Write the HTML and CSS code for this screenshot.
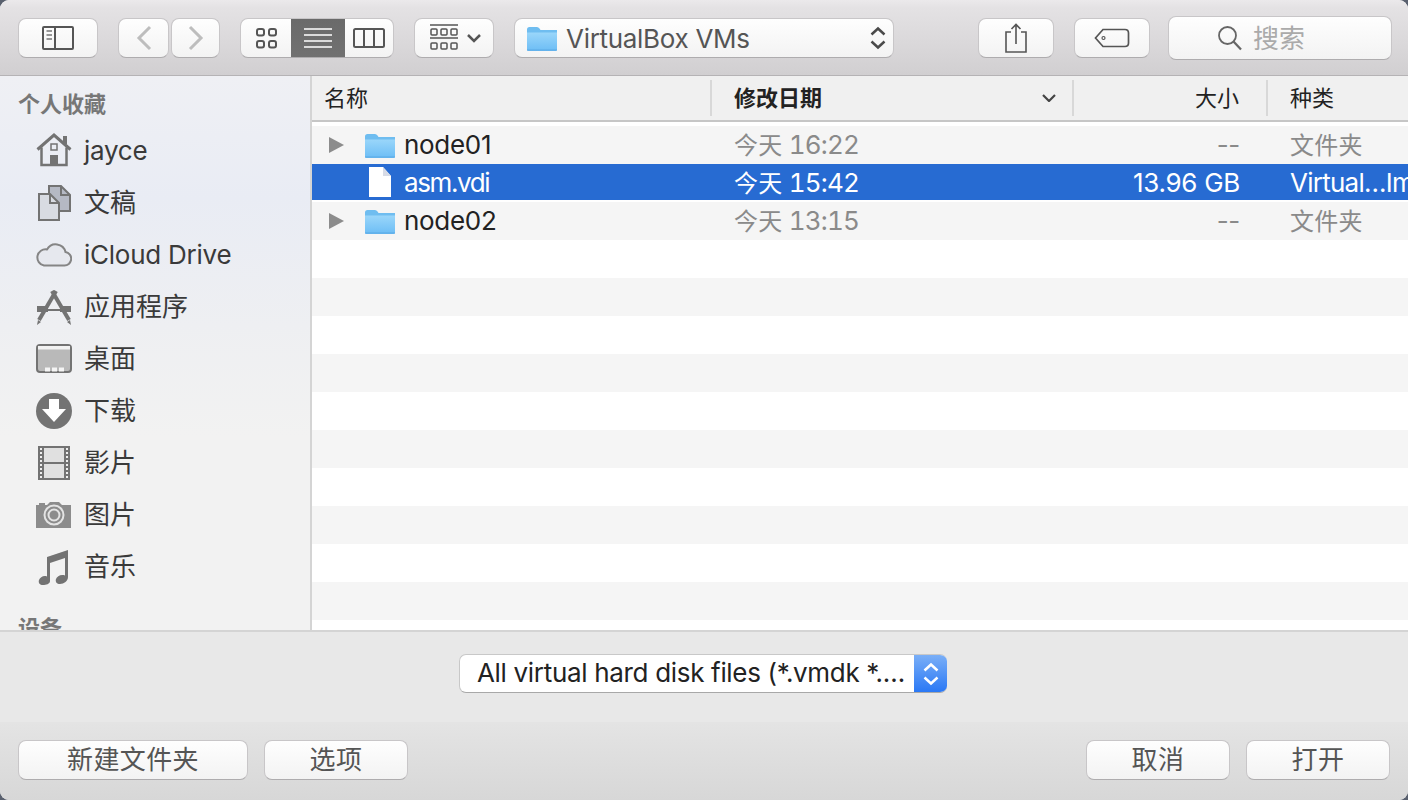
FILE: index.html
```html
<!DOCTYPE html>
<html lang="zh">
<head>
<meta charset="utf-8">
<title>Open</title>
<link rel="stylesheet" href="styles.css">
</head>
<body>
<svg class="defs" width="0" height="0" aria-hidden="true">
  <defs>
    <linearGradient id="fg" x1="0" y1="0" x2="0" y2="1"><stop offset="0" stop-color="#9ad6fa"/><stop offset="1" stop-color="#6cbdf5"/></linearGradient>
    <symbol id="folder" viewBox="0 0 30 25">
      <path d="M0 3.500Q0 1 2.500 1H10Q11.500 1 12.500 2.500L13.500 4H30V23Q30 25 28 25H2Q0 25 0 23Z" fill="#6fbdf0"/>
      <path d="M0 6.500H30V23Q30 25 28 25H2Q0 25 0 23Z" fill="url(#fg)"/>
      <path d="M0 24H30" stroke="#5aa8e4" stroke-width="1"/>
    </symbol>
    <symbol id="updown" viewBox="0 0 18 24">
      <path d="M2.500 8.500L9 2.500L15.500 8.500M2.500 15.500L9 21.500L15.500 15.500" fill="none" stroke="currentColor" stroke-width="2.500"/>
    </symbol>
  </defs>
</svg>
<div class="window">
  <header class="toolbar">
    <button class="btn b-side"><svg width="32" height="24" viewBox="0 0 32 24"><rect x="1" y="1" width="30" height="22" rx="1" fill="none" stroke="#555" stroke-width="2"/><path d="M13 1V23" stroke="#555" stroke-width="2"/><path d="M4.500 5H10M4.500 9H10M4.500 13H10" stroke="#777" stroke-width="1.500"/></svg></button>
    <div class="nav">
      <button class="btn b-nav1"><svg width="16" height="26" viewBox="0 0 16 26"><path d="M14 2L3 13L14 24" fill="none" stroke="#bdbdbd" stroke-width="3"/></svg></button>
      <button class="btn b-nav2"><svg width="16" height="26" viewBox="0 0 16 26"><path d="M2 2L13 13L2 24" fill="none" stroke="#bdbdbd" stroke-width="3"/></svg></button>
    </div>
    <div class="btn seg">
      <span class="seg-i s1"><svg width="22" height="22" viewBox="0 0 22 22"><g fill="none" stroke="#555" stroke-width="2"><rect x="2" y="2" width="7" height="6.500" rx="2"/><rect x="14" y="2" width="7" height="6.500" rx="2"/><rect x="2" y="14" width="7" height="6.500" rx="2"/><rect x="14" y="14" width="7" height="6.500" rx="2"/></g></svg></span>
      <span class="seg-i s2"><svg width="28" height="20" viewBox="0 0 28 20"><path d="M0 1H28M0 7H28M0 13H28M0 19H28" stroke="#fff" stroke-width="1.600"/></svg></span>
      <span class="seg-i s3"><svg width="32" height="20" viewBox="0 0 32 20"><rect x="1" y="1" width="30" height="18" rx="1.500" fill="none" stroke="#555" stroke-width="2"/><path d="M11 1V19M21 1V19" stroke="#555" stroke-width="2"/></svg></span>
    </div>
    <button class="btn b-group"><svg width="52" height="28" viewBox="0 0 52 28"><g fill="none" stroke="#555"><path d="M0 1H28M0 14H28" stroke-width="1.500"/><g stroke-width="1.500"><rect x="1" y="5" width="6" height="6" rx="1"/><rect x="11" y="5" width="6" height="6" rx="1"/><rect x="21" y="5" width="6" height="6" rx="1"/><rect x="1" y="19" width="6" height="6" rx="1"/><rect x="11" y="19" width="6" height="6" rx="1"/><rect x="21" y="19" width="6" height="6" rx="1"/></g><path d="M38 11L44 17L50 11" stroke-width="2.500"/></g></svg></button>
    <button class="btn b-path">
      <svg class="path-folder" width="30" height="25"><use href="#folder"/></svg>
      <span class="path-name">VirtualBox VMs</span>
      <svg class="path-arrows" width="18" height="24"><use href="#updown"/></svg>
    </button>
    <button class="btn b-share"><svg width="24" height="30" viewBox="0 0 24 30"><g fill="none" stroke="#555" stroke-width="1.600"><path d="M7 9H2V29H22V9H17"/><path d="M12 21V2M7.500 6L12 1.500L16.500 6"/></g></svg></button>
    <button class="btn b-tag"><svg width="36" height="20" viewBox="0 0 36 20"><path d="M9 1.500H31Q34.500 1.500 34.500 5V15Q34.500 18.500 31 18.500H9L1.500 10Z" fill="none" stroke="#555" stroke-width="1.700"/><circle cx="9.500" cy="10" r="1.500" fill="none" stroke="#555" stroke-width="1.200"/></svg></button>
    <div class="btn b-search">
      <svg width="26" height="26" viewBox="0 0 26 26"><circle cx="10.500" cy="10.500" r="8.500" fill="none" stroke="#666" stroke-width="1.800"/><path d="M16.500 16.500L24 24.500" stroke="#666" stroke-width="2.200"/></svg>
      <span class="search-text">搜索</span>
    </div>
  </header>

  <div class="middle">
    <nav class="sidebar">
      <h2 class="side-title">个人收藏</h2>
      <a class="side-item"><svg width="36" height="36" viewBox="0 0 36 36"><g fill="none" stroke="#737373"><path d="M1.500 16.500L18 2L34.500 16.500" stroke-width="3"/><path d="M5.500 14.500V32H30.500V14.500" stroke-width="2.500"/><rect x="15" y="11" width="6" height="6" stroke-width="1.500"/></g><rect x="27" y="3" width="4" height="8" fill="#737373"/><rect x="14" y="22" width="8" height="11" fill="#737373"/></svg><span class="latin">jayce</span></a>
      <a class="side-item"><svg width="36" height="36" viewBox="0 0 36 36"><g stroke="#737373" stroke-width="2"><path d="M13 1H25L34 10V26H13Z" fill="#b5b9c4"/><path d="M3 9H14L23 18V35H3Z" fill="#d8dbe2"/><path d="M14 9V18H23M25 1V10H34" fill="none"/></g></svg><span>文稿</span></a>
      <a class="side-item"><svg width="36" height="36" viewBox="0 0 36 36"><path d="M8 28.500H28A6.800 6.800 0 0 0 29.500 15A10 10 0 0 0 11 12.500A8 8 0 0 0 8 28.500Z" fill="#e6e8ee" stroke="#858585" stroke-width="2"/></svg><span class="latin">iCloud Drive</span></a>
      <a class="side-item"><svg width="36" height="36" viewBox="0 0 36 36"><g stroke="#737373" fill="none"><path d="M1 20H12M24 20H35" stroke-width="6"/><path d="M11 21H25" stroke-width="2"/><path d="M20 2L3 31" stroke-width="4"/><path d="M16 2L33 31" stroke-width="4"/></g><path d="M1 36L2 31L5 33ZM35 36L34 31L31 33Z" fill="#737373"/></svg><span>应用程序</span></a>
      <a class="side-item"><svg width="36" height="36" viewBox="0 0 36 36"><rect x="1" y="4" width="34" height="27" rx="3" fill="#b9b9b9" stroke="#737373" stroke-width="2"/><rect x="2" y="5" width="32" height="3.500" fill="#f2f2f2"/><path d="M9 26.500h5v4h-5zM16 26.500h5v4h-5zM23 26.500h5v4h-5z" fill="#f4f4f4"/></svg><span>桌面</span></a>
      <a class="side-item"><svg width="36" height="36" viewBox="0 0 36 36"><circle cx="18" cy="18" r="18" fill="#737373"/><path d="M13 6H23V16H30L18 29L6 16H13Z" fill="#fff"/></svg><span>下载</span></a>
      <a class="side-item"><svg width="36" height="36" viewBox="0 0 36 36"><rect x="2" y="1" width="32" height="34" fill="#737373"/><rect x="8" y="3" width="20" height="14" fill="#e0e0e0"/><rect x="8" y="19" width="20" height="14" fill="#e0e0e0"/><path d="M5 3V33M31 3V33" stroke="#eee" stroke-width="2" stroke-dasharray="2 2"/></svg><span>影片</span></a>
      <a class="side-item"><svg width="36" height="36" viewBox="0 0 36 36"><path d="M1 8H3V6H9V8H11L14 5H23L26 8H35V31H0V8Z" fill="#8c8c8c"/><circle cx="18" cy="18" r="9.500" fill="#8c8c8c" stroke="#e4e4e4" stroke-width="2"/><circle cx="18" cy="18" r="5.500" fill="none" stroke="#e4e4e4" stroke-width="2"/></svg><span>图片</span></a>
      <a class="side-item"><svg width="36" height="36" viewBox="0 0 36 36"><path d="M11 8L32 1V28C32 32 28 35 24 35C21 35 19 33 20 30C21 27 25 25 29 26.500V9L14 14V32C14 35 10 36 7 36C4 36 2 34 3 31C4 28 8 26 11 27.500Z" fill="#737373"/></svg><span>音乐</span></a>
      <h2 class="side-title t2">设备</h2>
    </nav>
    <main class="list">
      <div class="head">
        <div class="hc hc-name">名称</div>
        <div class="hc hc-date"><b>修改日期</b><svg width="14" height="8" viewBox="0 0 14 8"><path d="M1 1L7 7L13 1" fill="none" stroke="#444" stroke-width="2.200"/></svg></div>
        <div class="hc hc-size">大小</div>
        <div class="hc hc-kind">种类</div>
      </div>
      <div class="rows">
        <div class="row odd">
          <div class="c-name"><i class="tri"></i><svg class="ficon" width="30" height="25"><use href="#folder"/></svg><span>node01</span></div>
          <div class="c-date"><span class="cjk">今天</span> 16:22</div><div class="c-size">--</div><div class="c-kind cjk">文件夹</div>
        </div>
        <div class="row sel">
          <div class="c-name"><svg class="doc" width="24" height="31" viewBox="0 0 24 31"><path d="M1 0H15L23 9V30H1Z" fill="#fff"/><path d="M15 0V9H23" fill="#d7dbe6"/></svg><span class="tight">asm.vdi</span></div>
          <div class="c-date"><span class="cjk">今天</span> 15:42</div><div class="c-size">13.96 GB</div><div class="c-kind">Virtual…Im</div>
        </div>
        <div class="row odd">
          <div class="c-name"><i class="tri"></i><svg class="ficon" width="30" height="25"><use href="#folder"/></svg><span>node02</span></div>
          <div class="c-date"><span class="cjk">今天</span> 13:15</div><div class="c-size">--</div><div class="c-kind cjk">文件夹</div>
        </div>
        <div class="row"></div><div class="row odd"></div>
        <div class="row"></div><div class="row odd"></div>
        <div class="row"></div><div class="row odd"></div>
        <div class="row"></div><div class="row odd"></div>
        <div class="row"></div><div class="row odd"></div>
      </div>
    </main>
  </div>

  <section class="accessory">
    <div class="popup">
      <span class="popup-text">All virtual hard disk files (*.vmdk *.…</span>
      <span class="popup-arrows"><svg width="18" height="24"><use href="#updown"/></svg></span>
    </div>
  </section>

  <footer class="footer">
    <button class="btn fb fb-new">新建文件夹</button>
    <button class="btn fb">选项</button>
    <span class="spacer"></span>
    <button class="btn fb">取消</button>
    <button class="btn fb">打开</button>
  </footer>
</div>
</body>
</html>
```

FILE: styles.css
```css
* { box-sizing: border-box; }
html, body { margin: 0; padding: 0; height: 100%; background: #59606e; }
body { font-family: Inter, "Noto Sans CJK SC", sans-serif; overflow: hidden; }
.defs { position: absolute; }
.window {
  width: 1408px; height: 800px; display: flex; flex-direction: column;
  border-radius: 9px; overflow: hidden; background: #e8e8e8;
}
.btn {
  display: flex; align-items: center; justify-content: center; padding: 0;
  height: 40px; border: 1px solid #c8c6c8; border-bottom-color: #aeacae; border-radius: 8px;
  background: linear-gradient(#fefefe, #f3f3f3);
  font-family: inherit;
}
.toolbar {
  height: 76px; flex: none; display: flex; align-items: flex-start; padding: 18px 16px 0 18px;
  background: linear-gradient(#ebe9eb 0, #e4e2e4 10%, #d1cfd1 100%);
  border-bottom: 1px solid #b5b3b5;
}
.b-side { width: 80px; margin-right: 20px; }
.nav { display: flex; gap: 2px; margin-right: 20px; }
.b-nav1 { width: 51px; }
.b-nav2 { width: 49px; }
.seg { width: 154px; margin-right: 20px; overflow: hidden; justify-content: flex-start; }
.seg-i { height: 100%; display: flex; align-items: center; justify-content: center; }
.s1 { width: 50px; }
.s2 { width: 54px; background: linear-gradient(#6a6a6a, #717171); height: 40px; }
.s3 { flex: 1; }
.b-group { width: 80px; margin-right: 20px; justify-content: flex-start; padding-left: 15px; }
.b-path { width: 380px; margin-right: 84px; justify-content: flex-start; padding: 0 6px 0 12px; }
.path-folder { flex: none; }
.path-name { margin: 2px 0 0 9px; flex: 1; text-align: left; font-size: 26px; line-height: 30px; color: #555; letter-spacing: -0.3px; white-space: nowrap; }
.path-arrows { color: #4a4a4a; flex: none; }
.b-share { width: 76px; margin-right: 20px; }
.b-tag { width: 76px; margin-right: 18px; }
.b-search { width: 224px; height: 44px; margin-top: -2px; gap: 10px; color: #aaa; font-size: 26px; line-height: 30px; padding: 0 38px 0 0; }
.search-text { margin-top: 2px; }

.middle { flex: none; height: 554px; display: flex; overflow: hidden; }
.sidebar {
  width: 312px; flex: none; overflow: hidden; border-right: 2px solid #d4d4d4;
  background: linear-gradient(#eff0f4 0, #e9ecf4 22%, #eeeff2 45%, #f2f2f2 65%, #f2f2f2 100%);
  padding-top: 15px;
}
.side-title { margin: 0 0 8px 18px; font-size: 22px; line-height: 26px; font-weight: 700; color: #777; }
.side-title.t2 { margin-top: 22px; }
.side-item { height: 52px; display: flex; align-items: center; gap: 12px; padding-left: 36px; font-size: 26px; line-height: 30px; color: #3a3a3a; }
.side-item svg { flex: none; }
.latin { letter-spacing: -0.25px; }

.list { flex: 1; min-width: 0; background: #fff; overflow: hidden; }
.head { height: 46px; display: grid; grid-template-columns: 398px 362px 194px 1fr; align-items: center; background: #f0f0f0; border-bottom: 2px solid #c6c6c6; font-size: 22px; line-height: 26px; color: #222; }
.hc { height: 36px; display: flex; align-items: center; }
.hc-name { padding-left: 12px; }
.hc-date { border-left: 2px solid #d8d8d8; padding: 0 16px 0 22px; justify-content: space-between; }
.hc-date b { font-weight: 700; }
.hc-size { border-left: 2px solid #d8d8d8; justify-content: flex-end; padding-right: 27px; }
.hc-kind { border-left: 2px solid #d8d8d8; padding-left: 22px; }
.rows { padding-top: 4px; }
.row { height: 38px; display: grid; grid-template-columns: 399px 362px 194px 1fr; align-items: center; font-size: 26px; line-height: 30px; letter-spacing: -0.3px; color: #8a8a8a; white-space: nowrap; }
.row.odd { background: #f5f5f5; }
.row.sel { background: linear-gradient(#276bd2 36px, #fff 36px); color: #fff; }
.cjk { font-size: 24px; letter-spacing: 0.3px; }
.tight { letter-spacing: -1.4px; }
.c-name { display: flex; align-items: center; color: #222; padding-left: 17px; }
.sel .c-name { color: #fff; padding-left: 56px; }
.tri { width: 0; height: 0; border-left: 15px solid #8c8c8c; border-top: 8.500px solid transparent; border-bottom: 8.500px solid transparent; margin-right: 21px; }
.ficon { margin-right: 9px; flex: none; }
.doc { margin: -2px 12px 0 0; flex: none; }
.c-date { padding-left: 23px; font-variant-numeric: tabular-nums; letter-spacing: -0.85px; }
.c-size { text-align: right; padding-right: 27px; }
.c-kind { padding-left: 23px; overflow: hidden; }
.c-kind.cjk { padding-top: 2px; }
.sel .c-kind { letter-spacing: -0.75px; }

.accessory { flex: none; height: 92px; border-top: 2px solid #d4d4d4; background: #e8e8e8; display: flex; justify-content: center; align-items: flex-start; padding-top: 22px; padding-right: 2px; }
.popup { width: 488px; height: 39px; display: flex; border-radius: 7px; overflow: hidden; background: #fff; border: 1px solid #c8c8c8; border-bottom-color: #a8a8a8; border-right: 0; }
.popup-text { flex: 1; padding-left: 17px; font-size: 26px; line-height: 36px; letter-spacing: -0.32px; color: #222; white-space: nowrap; overflow: hidden; }
.popup-arrows { width: 33px; flex: none; color: #fff; display: flex; align-items: center; justify-content: center; background: linear-gradient(#7aaff7, #2a78f5); }

.footer { flex: 1; display: flex; align-items: flex-start; gap: 16px; padding: 18px 18px 0; background: linear-gradient(#e4e4e4, #d7d7d7); }
.fb { width: 144px; font-size: 26px; line-height: 30px; letter-spacing: 0.4px; color: #555; }
.fb-new { width: 230px; }
.spacer { flex: 1; }
```
